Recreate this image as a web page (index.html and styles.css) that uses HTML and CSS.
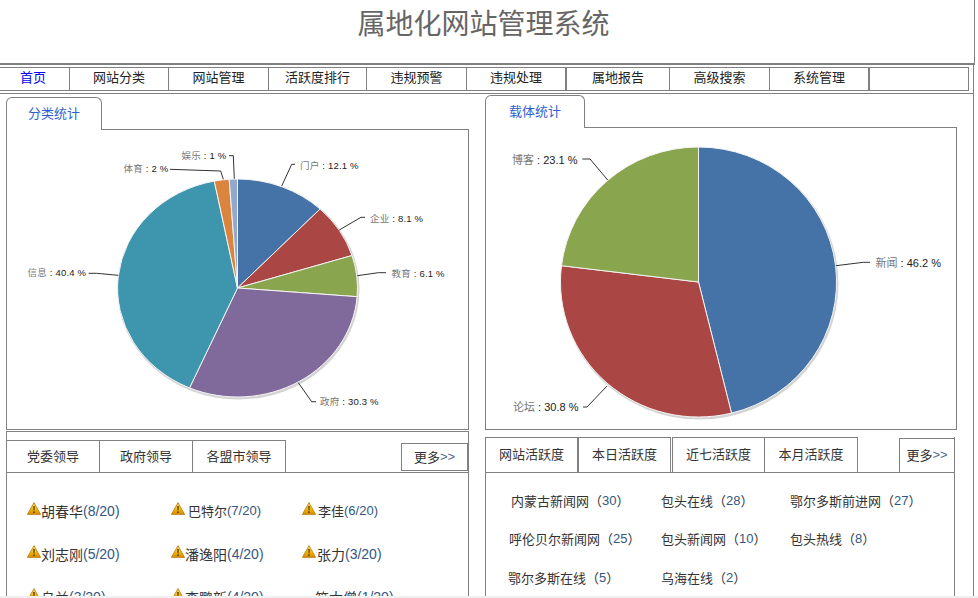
FILE: index.html
```html
<!DOCTYPE html>
<html lang="zh-CN">
<head>
<meta charset="utf-8">
<title>属地化网站管理系统</title>
<link rel="stylesheet" href="styles.css">
</head>
<body>
<svg class="defs" width="0" height="0" aria-hidden="true">
  <defs>
    <linearGradient id="warnFill" x1="0" y1="0" x2="0" y2="1">
      <stop offset="0" stop-color="#ffe27a"/>
      <stop offset="0.55" stop-color="#f2b705"/>
      <stop offset="1" stop-color="#d88a00"/>
    </linearGradient>
    <symbol id="warn" viewBox="0 0 14 13">
      <path d="M7 .6 13.6 12.4H.4Z" fill="url(#warnFill)" stroke="#b87a0c" stroke-width=".8" stroke-linejoin="round"/>
      <path d="M6.3 4h1.4l-.3 4.6h-.8Z" fill="#3a2a08"/>
      <rect x="6.3" y="9.4" width="1.4" height="1.5" fill="#3a2a08"/>
    </symbol>
  </defs>
</svg>
<div class="page">
  <header class="header"><h1 class="title">属地化网站管理系统</h1></header>
  <div class="navwrap">
    <nav class="nav">
      <a class="nav-item is-active">首页</a>
      <a class="nav-item">网站分类</a>
      <a class="nav-item">网站管理</a>
      <a class="nav-item">活跃度排行</a>
      <a class="nav-item">违规预警</a>
      <a class="nav-item thick">违规处理</a>
      <a class="nav-item">属地报告</a>
      <a class="nav-item">高级搜索</a>
      <a class="nav-item thick">系统管理</a>
      <a class="nav-item"></a>
    </nav>
  </div>
  <main class="content">
    <section class="col col-left">
      <div class="tab">分类统计</div>
      <div class="chart chart-left">
        <svg class="pie" width="461" height="299" viewBox="7 130 461 299" role="img" aria-label="分类统计">
          <ellipse class="pie-shadow" cx="238.5" cy="289.5" rx="121" ry="110"/>
          <g transform="translate(237.5 288)">
            <path class="slice" fill="#4572A7" d="M0 0V-109A120 109 0 0 1 82.6-79Z"/>
            <path class="slice" fill="#AA4643" d="M0 0L82.6-79A120 109 0 0 1 114.5-32.5Z"/>
            <path class="slice" fill="#89A54E" d="M0 0L114.5-32.5A120 109 0 0 1 119.6 8.7Z"/>
            <path class="slice" fill="#80699B" d="M0 0L119.6 8.7A120 109 0 0 1-48 99.9Z"/>
            <path class="slice" fill="#3D96AE" d="M0 0L-48 99.9A120 109 0 0 1-23.2-106.9Z"/>
            <path class="slice" fill="#DB843D" d="M0 0L-23.2-106.9A120 109 0 0 1-8.3-108.7Z"/>
            <path class="slice" fill="#92A8CD" d="M0 0L-8.3-108.7A120 109 0 0 1 0-109Z"/>
          </g>
          <polyline class="lead" points="281.7,186 291.7,164.3 295,164.3"/>
          <polyline class="lead" points="339.3,230 361,217.3 365,217.3"/>
          <polyline class="lead" points="357.3,275.7 378.3,272.7 386,272.7"/>
          <polyline class="lead" points="298.3,382.7 311.7,401.7 316,401.7"/>
          <polyline class="lead" points="118.3,275.3 96.7,273.3 88.7,273.3"/>
          <polyline class="lead" points="223.3,179.3 220.7,171 170,169.3"/>
          <polyline class="lead" points="234.3,178.7 233.3,155.7 229,155.7"/>
          <text class="lbl" x="300" y="168.5"><tspan class="lbl-name">门户</tspan> : 12.1 %</text>
          <text class="lbl" x="370" y="221.5"><tspan class="lbl-name">企业</tspan> : 8.1 %</text>
          <text class="lbl" x="391.5" y="276.5"><tspan class="lbl-name">教育</tspan> : 6.1 %</text>
          <text class="lbl" x="320" y="404.5"><tspan class="lbl-name">政府</tspan> : 30.3 %</text>
          <text class="lbl" x="27.5" y="276"><tspan class="lbl-name">信息</tspan> : 40.4 %</text>
          <text class="lbl" x="123.5" y="172"><tspan class="lbl-name">体育</tspan> : 2 %</text>
          <text class="lbl" x="181.5" y="158.5"><tspan class="lbl-name">娱乐</tspan> : 1 %</text>
        </svg>
      </div>
      <div class="box box-left">
        <div class="bar bar-left">
          <div class="bar-tabs">
            <span class="bar-tab">党委领导</span>
            <span class="bar-tab">政府领导</span>
            <span class="bar-tab">各盟市领导</span>
          </div>
          <span class="more more-left">更多<span class="more-arrows">&gt;&gt;</span></span>
        </div>
        <ul class="leaders">
          <li class="leader"><svg class="warn"><use href="#warn"/></svg>胡春华<span class="num">(8/20)</span></li>
          <li class="leader sp3 small"><svg class="warn"><use href="#warn"/></svg>巴特尔<span class="num">(7/20)</span></li>
          <li class="leader sp2 small"><svg class="warn"><use href="#warn"/></svg>李佳<span class="num">(6/20)</span></li>
          <li class="leader"><svg class="warn"><use href="#warn"/></svg>刘志刚<span class="num">(5/20)</span></li>
          <li class="leader"><svg class="warn"><use href="#warn"/></svg>潘逸阳<span class="num">(4/20)</span></li>
          <li class="leader sp1"><svg class="warn"><use href="#warn"/></svg>张力<span class="num">(3/20)</span></li>
          <li class="leader"><svg class="warn"><use href="#warn"/></svg>乌兰<span class="num">(3/20)</span></li>
          <li class="leader"><svg class="warn"><use href="#warn"/></svg>李鹏新<span class="num">(4/20)</span></li>
          <li class="leader plain">符大僧<span class="num">(1/20)</span></li>
        </ul>
      </div>
    </section>
    <section class="col col-right">
      <div class="tab tab-right">载体统计</div>
      <div class="chart chart-right">
        <svg class="pie" width="470" height="301" viewBox="486 128 470 301" role="img" aria-label="载体统计">
          <ellipse class="pie-shadow" cx="699.5" cy="283.5" rx="139" ry="136"/>
          <g transform="translate(698.5 282)">
            <path class="slice" fill="#4572A7" d="M0 0V-135A138 135 0 0 1 33 131.1Z"/>
            <path class="slice" fill="#AA4643" d="M0 0L33 131.1A138 135 0 0 1-137-16.3Z"/>
            <path class="slice" fill="#89A54E" d="M0 0L-137-16.3A138 135 0 0 1 0-135Z"/>
          </g>
          <polyline class="lead" points="836,265.7 863.3,262.3 870,262.3"/>
          <polyline class="lead" points="607.7,180 590,159 582.3,159"/>
          <polyline class="lead" points="607,386 587,407 583,407"/>
          <text class="lbl lbl-big" x="875.5" y="267"><tspan class="lbl-name">新闻</tspan> : 46.2 %</text>
          <text class="lbl lbl-big" x="512" y="164"><tspan class="lbl-name">博客</tspan> : 23.1 %</text>
          <text class="lbl lbl-big" x="513" y="411"><tspan class="lbl-name">论坛</tspan> : 30.8 %</text>
        </svg>
      </div>
      <div class="box box-right">
        <div class="bar bar-right">
          <div class="bar-tabs">
            <span class="bar-tab bar-tab-a">网站活跃度</span>
            <span class="bar-tab bar-tab-b">本日活跃度</span>
            <span class="bar-tab bar-tab-c">近七活跃度</span>
            <span class="bar-tab">本月活跃度</span>
          </div>
          <span class="more more-right">更多<span class="more-arrows">&gt;&gt;</span></span>
        </div>
        <ul class="sites">
          <li class="site in-a">内蒙古新闻网（<span class="num">30</span>）</li>
          <li class="site">包头在线（<span class="num">28</span>）</li>
          <li class="site">鄂尔多斯前进网（<span class="num">27</span>）</li>
          <li class="site in-b">呼伦贝尔新闻网（<span class="num">25</span>）</li>
          <li class="site">包头新闻网（<span class="num">10</span>）</li>
          <li class="site">包头热线（<span class="num">8</span>）</li>
          <li class="site">鄂尔多斯在线（<span class="num">5</span>）</li>
          <li class="site">乌海在线（<span class="num">2</span>）</li>
        </ul>
      </div>
    </section>
  </main>
</div>
</body>
</html>
```

FILE: styles.css
```css
* { box-sizing: border-box; }
html, body { margin: 0; padding: 0; height: 100%; overflow: hidden; background: #f0f0f0; }
body { font-family: "Liberation Sans", "Noto Sans CJK SC", sans-serif; font-size: 13px; color: #333; }
.defs { position: absolute; }
.page { width: 978px; height: 596px; overflow: hidden; background: #fff; }

.header { width: 975px; height: 65px; border-right: 1px solid #808080; border-bottom: 2px solid #808080; display: flex; justify-content: center; padding-right: 7px; }
.title { margin: 8px 0 0; font-family: "Liberation Serif", "Noto Sans CJK SC", serif; font-weight: 400; font-size: 28px; line-height: 34px; color: #666; }

.navwrap { width: 974px; height: 29px; border-right: 1px solid #808080; border-bottom: 1px solid #808080; padding-top: 2px; }
.nav { width: 969px; height: 24px; display: grid; grid-template-columns: 70px 99px 100px 98px 100px 100px 103px 100px 100px 99px; border: 1px solid #808080; border-left: 0; }
.nav-item { display: flex; align-items: center; justify-content: center; border-right: 1px solid #808080; color: #222; line-height: 20px; padding-bottom: 2px; }
.nav-item:last-child { border-right: 0; }
.nav-item.thick { border-right-width: 2px; }
.is-active { color: #0000ee; padding-right: 3px; }

.content { width: 974px; height: 502px; border-right: 1px solid #808080; display: flex; }
.col { display: flex; flex-direction: column; }
.col > * { flex: none; }
.col-left { width: 485px; padding: 3px 0 0 6px; }
.col-right { padding-top: 1px; }

.tab { width: 96px; height: 33px; margin-bottom: -1px; position: relative; background: #fff; border: 1px solid #808080; border-bottom: 0; border-radius: 6px 6px 0 0; display: flex; align-items: center; justify-content: center; color: #2f5fcf; padding-bottom: 3px; }
.tab-right { width: 100px; }

.chart { border: 1px solid #808080; }
.chart-left { width: 463px; height: 301px; }
.chart-right { width: 472px; height: 303px; }
.pie { display: block; }
.pie-shadow { fill: #d4d4d4; }
.slice { stroke: #f4f4f4; stroke-width: 1; stroke-linejoin: round; }
.lead { fill: none; stroke: #333; stroke-width: 1; }
.lbl { font-size: 9.5px; letter-spacing: .2px; fill: #222; font-family: "Liberation Sans", "Noto Sans CJK SC", sans-serif; }
.lbl-big { font-size: 11px; letter-spacing: 0; }
.lbl-name { fill: #777; }

.box { border: 1px solid #808080; border-bottom: 0; overflow: hidden; }
.box-left { width: 463px; height: 170px; margin-top: 1px; padding-top: 8px; }
.box-right { width: 470px; height: 160px; margin-top: 7px; border-top: 0; }

.bar { display: flex; justify-content: space-between; border-bottom: 1px solid #808080; }
.bar-left { height: 33px; }
.bar-right { height: 36px; }
.bar-tabs { display: flex; }
.bar-tab { width: 93px; display: flex; align-items: center; justify-content: center; border-top: 1px solid #808080; border-right: 1px solid #808080; color: #333; padding-bottom: 3px; }
.bar-tab-a { border-right-width: 2px; }
.bar-tab-b { width: 92px; margin-right: 1px; }
.bar-tab-c { border-left: 1px solid #808080; }
.more { display: flex; align-items: center; justify-content: center; border: 1px solid #808080; color: #333; }
.more-left { width: 67px; height: 28px; margin-top: 3px; padding-bottom: 2px; }
.more-right { width: 55px; height: 34px; margin-top: 1px; border-right: 0; border-bottom: 0; padding-bottom: 3px; }
.more-arrows { color: #4d6a90; }

.leaders { list-style: none; margin: 0; padding: 16px 0 0 20px; display: grid; grid-template-columns: 144px 131px 1fr; grid-auto-rows: 43px; font-size: 14px; }
.leader { display: flex; align-items: center; }
.small { font-size: 13px; }
.warn { width: 14px; height: 13px; margin-top: -5px; flex: none; }
.sp1 .warn { margin-right: 1px; }
.sp2 .warn { margin-right: 2px; }
.sp3 .warn { margin-right: 3px; }
.plain { padding-left: 13px; }
.num { color: #33567f; }

.sites { list-style: none; margin: 0; padding: 8px 0 0 22px; display: grid; grid-template-columns: 153px 129px 1fr; grid-auto-rows: 38.5px; }
.site { display: flex; align-items: center; white-space: nowrap; padding-left: 0; }
.in-a { padding-left: 3px; }
.in-b { padding-left: 1px; }
```
